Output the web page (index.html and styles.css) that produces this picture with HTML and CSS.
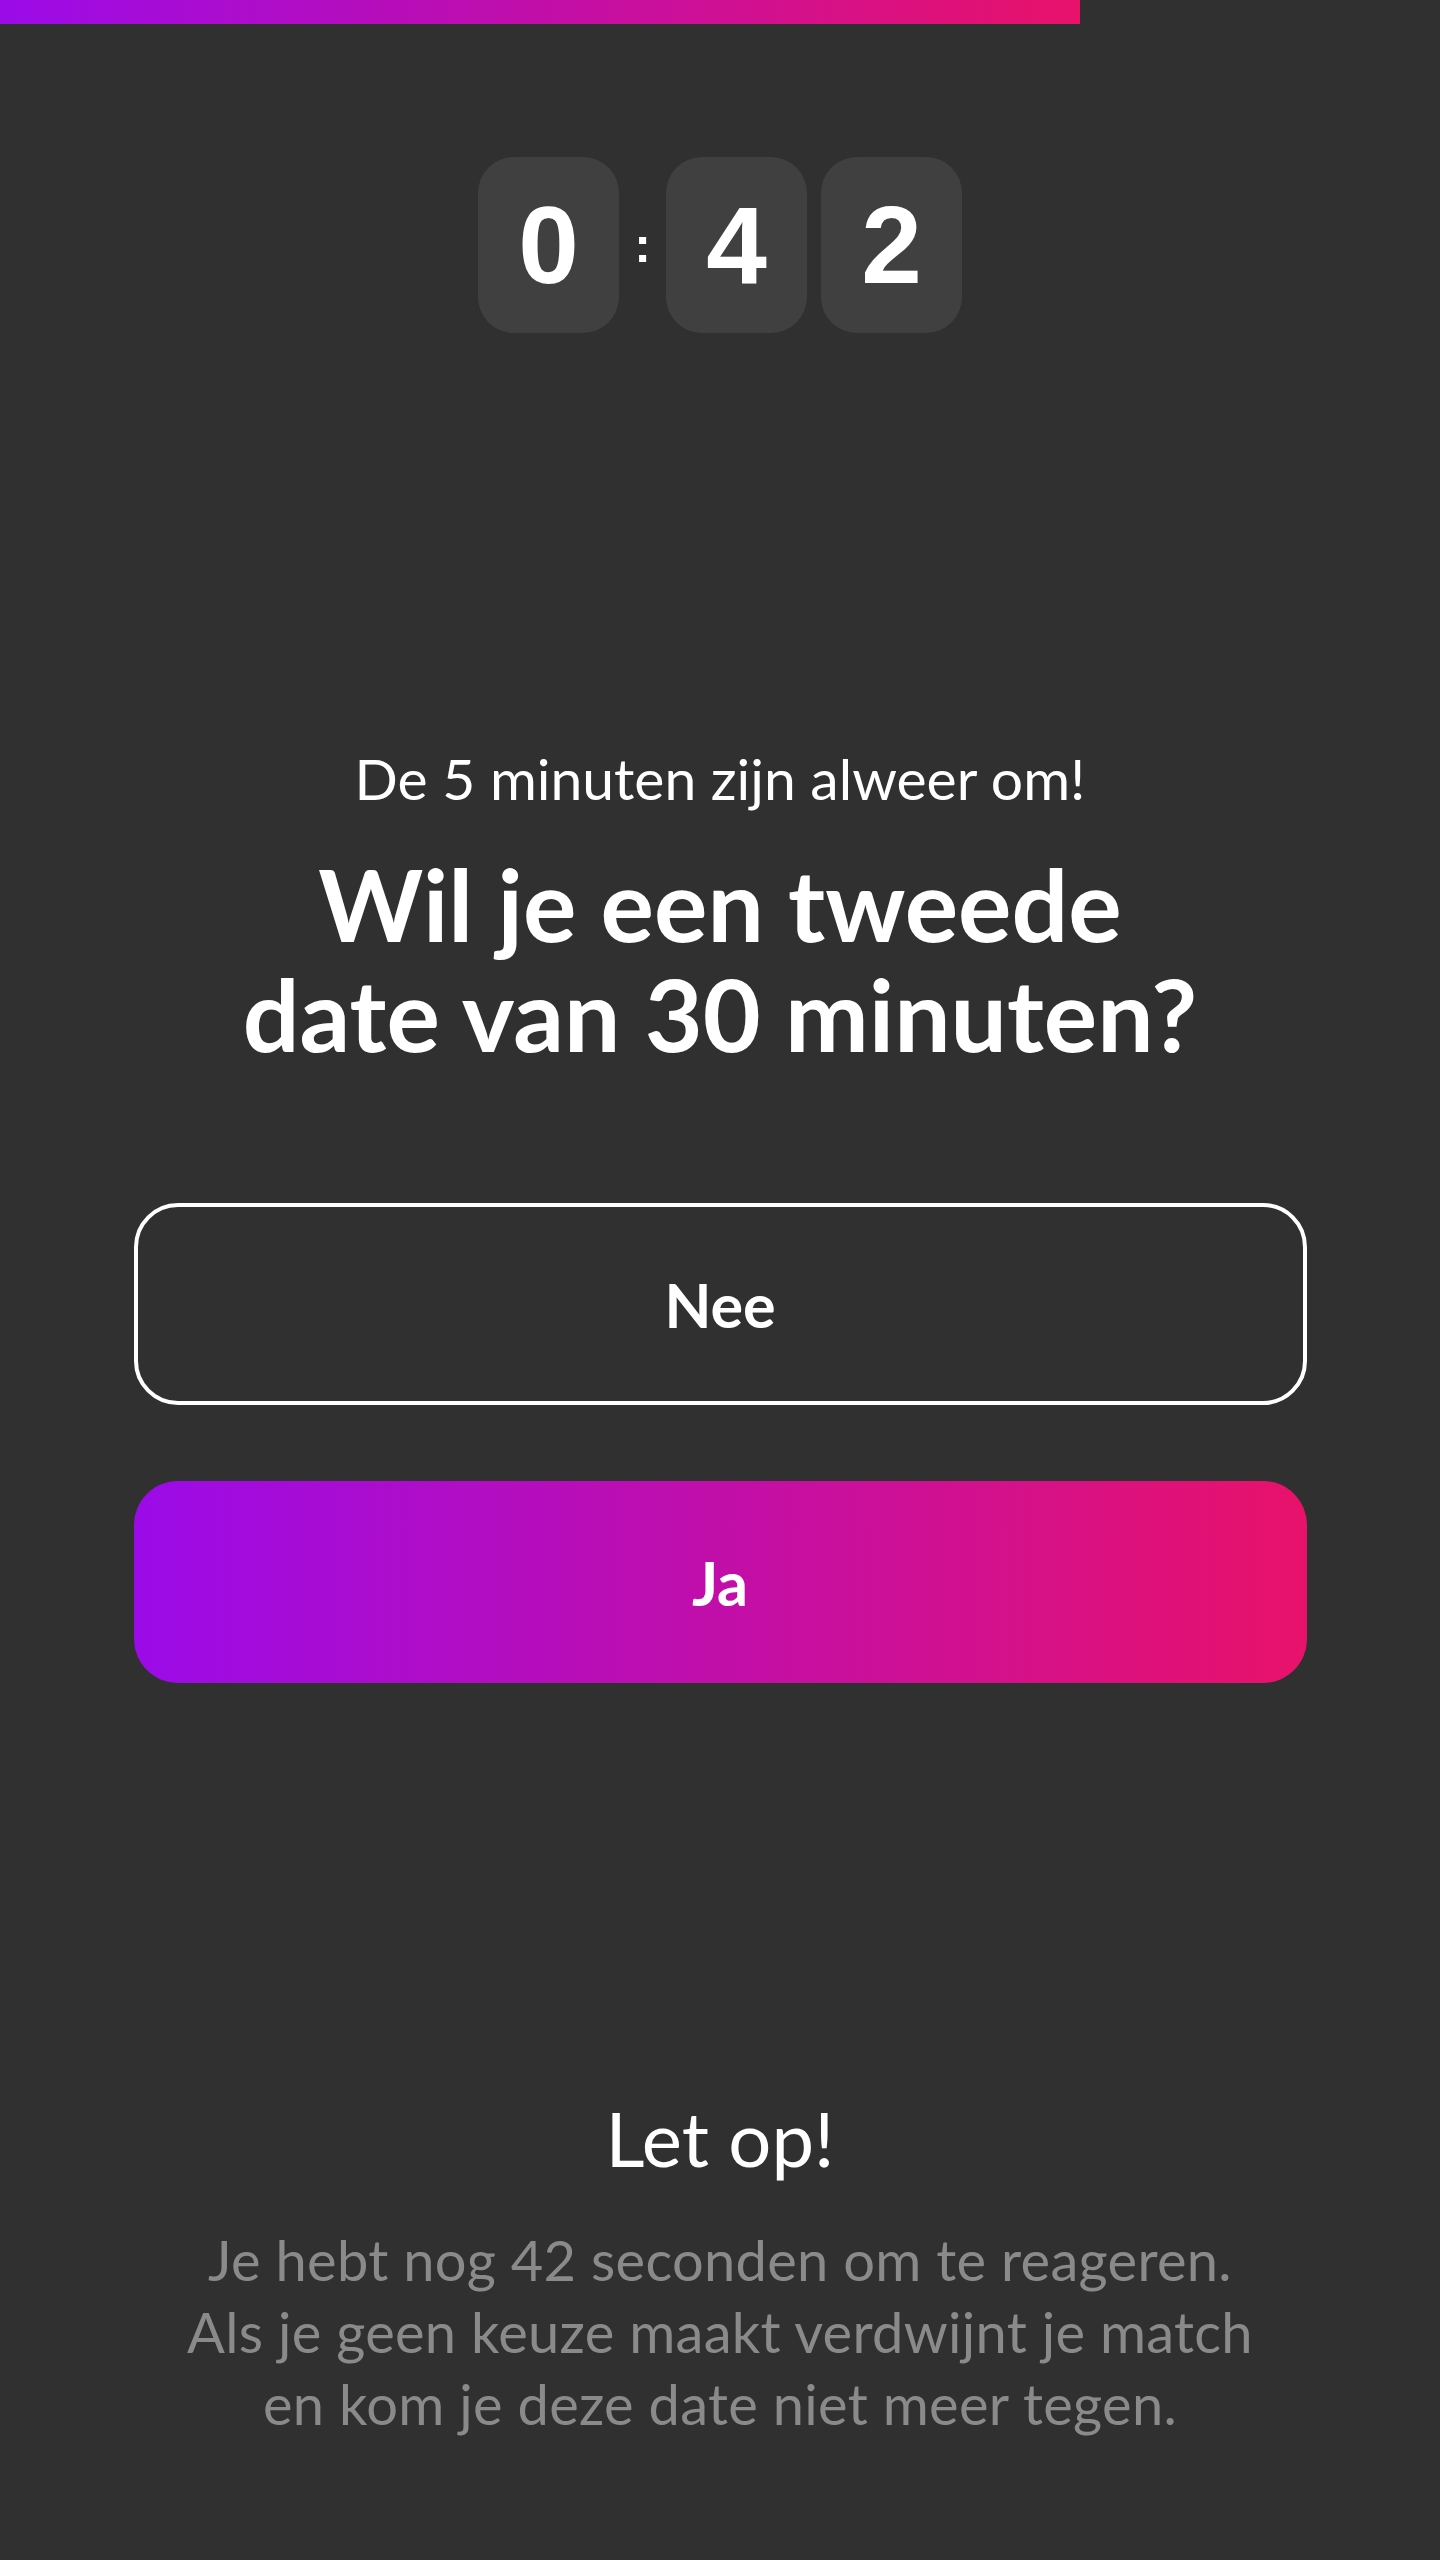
FILE: index.html
```html
<!DOCTYPE html>
<html lang="nl">
<head>
<meta charset="utf-8">
<title>Tweede date</title>
<link rel="stylesheet" href="styles.css">
</head>
<body>
<div class="progress"></div>
<main class="screen">
  <div class="timer">
    <div class="digit">0</div>
    <div class="colon">:</div>
    <div class="digit">4</div>
    <div class="digit">2</div>
  </div>
  <p class="subtitle">De 5 minuten zijn alweer om!</p>
  <h1 class="title">Wil je een tweede<br>date van 30 minuten?</h1>
  <div class="actions">
    <button class="btn btn-outline">Nee</button>
    <button class="btn btn-gradient">Ja</button>
  </div>
  <h2 class="notice-title">Let op!</h2>
  <p class="notice-text">Je hebt nog 42 seconden om te reageren.<br>Als je geen keuze maakt verdwijnt je match<br>en kom je deze date niet meer tegen.</p>
</main>
</body>
</html>
```
FILE: styles.css
```css
html, body {
  margin: 0;
  padding: 0;
  background: #303030;
}
body {
  font-family: Lato, "Noto Sans", sans-serif;
  color: #ffffff;
}
.progress {
  width: 75%;
  height: 24px;
  background: linear-gradient(90deg, #9b0be8 0%, #e8126a 100%);
}
.screen {
  display: flex;
  flex-direction: column;
  align-items: center;
}
.timer {
  display: flex;
  align-items: center;
  gap: 14px;
  margin-top: 133px;
}
.digit {
  width: 141px;
  height: 176px;
  border-radius: 36px;
  background: #404040;
  display: flex;
  align-items: center;
  justify-content: center;
  font-family: "Liberation Sans", Arial, sans-serif;
  font-weight: 700;
  font-size: 109px;
  line-height: 1;
  color: #fff;
}
.colon {
  width: 19px;
  text-align: center;
  font-family: "Liberation Sans", Arial, sans-serif;
  font-weight: 700;
  font-size: 50px;
  line-height: 1;
  color: #fff;
}
.subtitle {
  margin: 411px 0 0;
  font-size: 57px;
  line-height: 1.2;
  font-weight: 400;
  text-align: center;
}
.title {
  margin: 36px 0 0;
  font-size: 100px;
  line-height: 110px;
  font-weight: 700;
  text-align: center;
}
.actions {
  margin-top: 135px;
  width: 1173px;
  display: flex;
  flex-direction: column;
  gap: 76px;
}
.btn {
  height: 202px;
  border-radius: 44px;
  font-family: Lato, sans-serif;
  font-weight: 700;
  font-size: 61px;
  color: #fff;
  cursor: pointer;
}
.btn-outline {
  background: transparent;
  border: 4px solid #ffffff;
}
.btn-gradient {
  border: none;
  background: linear-gradient(90deg, #9b0be8 0%, #e8126a 100%);
}
.notice-title {
  margin: 409px 0 0;
  font-size: 76px;
  line-height: 1.2;
  font-weight: 400;
  text-align: center;
}
.notice-text {
  margin: 40px 0 0;
  font-size: 56px;
  line-height: 72px;
  letter-spacing: 0.3px;
  color: #8a8a8a;
  text-align: center;
}
```
